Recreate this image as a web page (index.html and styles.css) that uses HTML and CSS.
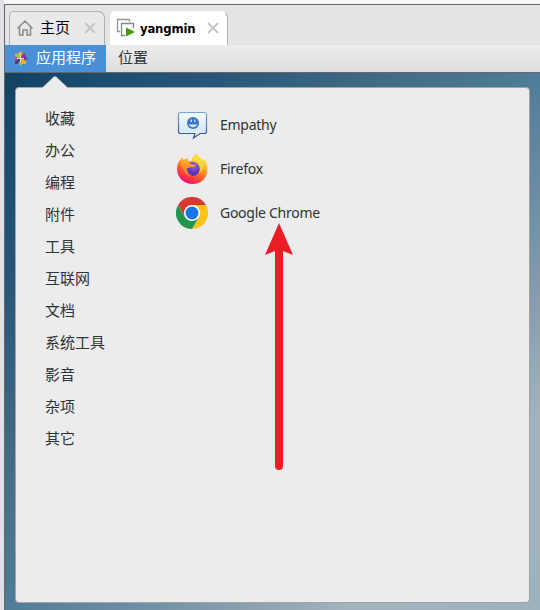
FILE: index.html
```
<!DOCTYPE html>
<html lang="zh-CN">
<head>
<meta charset="utf-8">
<title>yangmin</title>
<link rel="stylesheet" href="styles.css">
</head>
<body>
<div class="window">
  <nav class="tabs">
    <div class="tab home">
      <svg class="tab-icon" width="18" height="18" viewBox="0 0 18 18"><path d="M1.500 9.500 9 2l7.500 7.500M3.500 8.500v7.500h3.500v-5h4v5h3.500V8.500" fill="none" stroke="#8b8b8b" stroke-width="1.500"/></svg>
      <span class="tab-title">主页</span>
      <svg class="close" width="12" height="12" viewBox="0 0 12 12"><path d="m1 1 10 10M11 1 1 11"/></svg>
    </div>
    <div class="tab active">
      <svg class="tab-icon" width="19" height="19" viewBox="0 0 19 19"><path d="M4 13.500H1.500v-12h12V4" fill="none" stroke="#969696" stroke-width="1.300"/><path d="M9 17.500H5.500v-12h12V10" fill="none" stroke="#858585" stroke-width="1.300"/><path d="m10 9.500 9 4.500-9 4.500z" fill="#459b0c"/></svg>
      <span class="tab-title">yangmin</span>
      <svg class="close" width="12" height="12" viewBox="0 0 12 12"><path d="m1 1 10 10M11 1 1 11"/></svg>
    </div>
  </nav>
  <header class="menubar">
    <div class="menu selected">
      <svg width="15" height="15" viewBox="0 0 15 15"><path d="M2 2.500h5V7H2z" fill="#9ccd2a"/><path d="M8 2.500h5V7H8z" fill="#9c3d8a"/><path d="M2 8h5v5H2z" fill="#4b3f8e"/><path d="M8 8h5v5H8z" fill="#eeaa3d"/><path d="m7.500 0 2.300 3-2.300 2-2.300-2z" fill="#efb541"/><path d="m0 7.500 3-2.300 2 2.300-2 2.300z" fill="#b05aad"/><path d="m15 7.500-3-2.300-2 2.300 2 2.300z" fill="#5e438d"/><path d="m7.500 15-2.300-3 2.300-2 2.300 2z" fill="#a5ca38"/><path d="M7.500 4v7M4 7.500h7" stroke="#f3dfd1" stroke-width=".9"/></svg>
      <span>应用程序</span>
    </div>
    <div class="menu">位置</div>
  </header>
  <main class="desktop">
    <section class="panel">
      <svg class="pointer" width="26" height="13" viewBox="0 0 26 13"><path d="M0 12 11.500 1.200Q13 0 14.500 1.200L26 12v1H0z" fill="#ececec"/><path d="M1 11.500 11.500 1.200Q13 0 14.500 1.200L25 11.500" fill="none" stroke="#c4ced2" stroke-width=".7"/></svg>
      <ul class="categories">
        <li>收藏</li><li>办公</li><li>编程</li><li>附件</li><li>工具</li><li>互联网</li><li>文档</li><li>系统工具</li><li>影音</li><li>杂项</li><li>其它</li>
      </ul>
      <ul class="apps">
        <li>
          <svg width="32" height="32" viewBox="0 0 32 32"><defs><linearGradient id="bubble" x2="0" y2="1"><stop stop-color="#f4faff"/><stop offset=".7" stop-color="#d9e7f6"/><stop offset="1" stop-color="#fff"/></linearGradient><linearGradient id="edge" x2="0" y2="1"><stop stop-color="#76a6df"/><stop offset="1" stop-color="#24508d"/></linearGradient></defs><path d="M4.500 3.500h24q2 0 2 2v17q0 2-2 2h-4.500l-6.500 4.500 1.500-4.500H4.500q-2 0-2-2v-17q0-2 2-2z" fill="url(#bubble)" stroke="url(#edge)" stroke-width="1.200"/><circle cx="17" cy="14" r="6" fill="#3c75c7"/><path d="M15.200 10.500v2.500M18.800 10.500v2.500" stroke="#e6f0ff" stroke-width="1.200"/><path d="M13 15q4 1.200 8 0-.8 3.200-4 3.200T13 15z" fill="#d2e3fa"/></svg>
          <span>Empathy</span>
        </li>
        <li>
          <svg width="32" height="32" viewBox="0 0 32 32"><defs><linearGradient id="fire" x1=".8" y1="0" x2=".3" y2="1"><stop stop-color="#fff44f"/><stop offset=".25" stop-color="#ffcf32"/><stop offset=".52" stop-color="#ff8124"/><stop offset=".78" stop-color="#ff3b3e"/><stop offset="1" stop-color="#ee087f"/></linearGradient><radialGradient id="globe" cx=".6" cy=".3"><stop stop-color="#9a5bf4"/><stop offset="1" stop-color="#5736b8"/></radialGradient><linearGradient id="fox" x2="0" y2="1"><stop stop-color="#ffb32c"/><stop offset="1" stop-color="#ff722a"/></linearGradient></defs><path d="M20.500 0c2 3.500 5 5 6.500 8l.5-2.500C30 8 31.500 12 31.500 16.500 31.500 25 25 31 16.500 31S1 24.500 1 16c0-4 1-7 3.500-9.500L7 4.500l-.5 3.300L12 5l-.8 3c1.800-.5 2.800-.2 4.300.5C15 5 18 3 20.500 0z" fill="url(#fire)"/><circle cx="16.700" cy="16" r="7" fill="url(#globe)"/><path d="M4.500 6.500 7 4.500l-.5 3.300L12 5l-.8 4c1.800 0 3.300 1 4.300 2.500h4.500c-.5 2-2 2.500-4 2.500-2 .3-3 1-5 1 0 4 2 7 5 7.500-4 1-8-2-8.500-6.500-2-2.500-3.500-5-3-9.500z" fill="url(#fox)"/><path d="M16 8c4 0 7 2 7.800 5 .7 3 .2 5.500-1.300 7.500 5.500-2 6-8 3.500-11.500L20.500 1C17 4 16 6 16 8z" fill="#ffdc3b" opacity=".75"/></svg>
          <span>Firefox</span>
        </li>
        <li>
          <svg width="32" height="32" viewBox="0 0 32 32"><path d="M16 8h13.860A16 16 0 0 1 16 32l6.930-12z" fill="#ffc21a"/><path d="M2.140 8 9.070 20 16 24l6.930-4L16 32A16 16 0 0 1 2.140 8z" fill="#229651"/><path d="M2.140 8A16 16 0 0 1 29.860 8H16l-6.930 12z" fill="#d93a30"/><circle cx="16" cy="16" r="8" fill="#fff"/><circle cx="16" cy="16" r="6.500" fill="#1a73e8"/></svg>
          <span>Google Chrome</span>
        </li>
      </ul>
      <svg class="arrow" width="28" height="247" viewBox="0 0 28 247"><path d="M14 0 28 32l-10-4v215a4 4 0 0 1-8 0V28L0 32z" fill="#ed1c24"/></svg>
    </section>
  </main>
</div>
</body>
</html>
```
FILE: styles.css
```
* { box-sizing: border-box; }
body { margin: 0; width: 540px; height: 610px; overflow: hidden; background: #dfe1e4; font: 15px "Noto Sans CJK SC", sans-serif; color: #2e3436; }
.window { height: 607px; margin: 4px 0 0 4px; border-top: 1px solid #666; border-left: 1px solid #666; display: flex; flex-direction: column; box-shadow: 0 -4px 0 #f7f7f7; }
.tabs { height: 40px; display: flex; align-items: flex-end; padding-left: 4px; gap: 5px; background: #e3e4e6; }
.tab { height: 34px; display: flex; align-items: center; border: 1px solid #b0b1b3; border-bottom: 0; border-radius: 5px 7px 0 0; padding: 0 8px 0 6px; color: #000; }
.home { width: 96px; background: #e8e9eb; }
.active { width: 118px; background: #fff; border-left-color: #fff; border-top-color: #fff; }
.tab-icon { flex: none; margin-top: -2px; }
.tab-title { margin: -4px 0 0 7px; line-height: 20px; }
.home .tab-title { margin-left: 6px; }
.active .tab-title { margin: 0 0 0 5px; font: bold 13px/20px "DejaVu Sans Condensed", "DejaVu Sans", sans-serif; font-stretch: condensed; letter-spacing: -.2px; }
.active .tab-icon { margin-left: -1px; }
.close { margin: -2px 0 0 auto; fill: none; stroke: #c4c4c4; stroke-width: 1.8; }
.menubar { height: 28px; display: flex; background: linear-gradient(#ededed, #dedede); border-bottom: 1px solid #66696b; }
.menu { display: flex; align-items: center; padding: 0 12px 4px; line-height: 22px; }
.selected { width: 101px; padding: 0 0 4px 8px; gap: 8px; background: #4a90d9; color: #fff; white-space: nowrap; }
.selected svg { margin-top: 3px; }
.desktop { flex: 1; padding: 14px 0 0 10px; background: linear-gradient(135deg, #124263 0%, #1b4d6f 9%, #285678 20%, #416c86 36%, #4f7c98 50%, #849cad 70%, #a3b3be 82%, #9db2be 100%); }
.panel { position: relative; width: 515px; height: 516px; display: flex; background: #ececec; border: 1px solid #a2a4a5; border-radius: 4px; }
.pointer { position: absolute; left: 26px; top: -12px; }
ul { list-style: none; margin: 0; padding: 0; }
.categories { width: 130px; margin: 14px 0 0 29px; }
.categories li { height: 32px; line-height: 31px; }
.apps { margin: 15px 0 0 1px; }
.apps li { height: 44px; display: flex; align-items: center; gap: 12px; font: 14px "Noto Sans", sans-serif; letter-spacing: -.27px; }
.apps span { margin-top: -2px; }
.arrow { position: absolute; left: 249px; top: 135px; }
```
